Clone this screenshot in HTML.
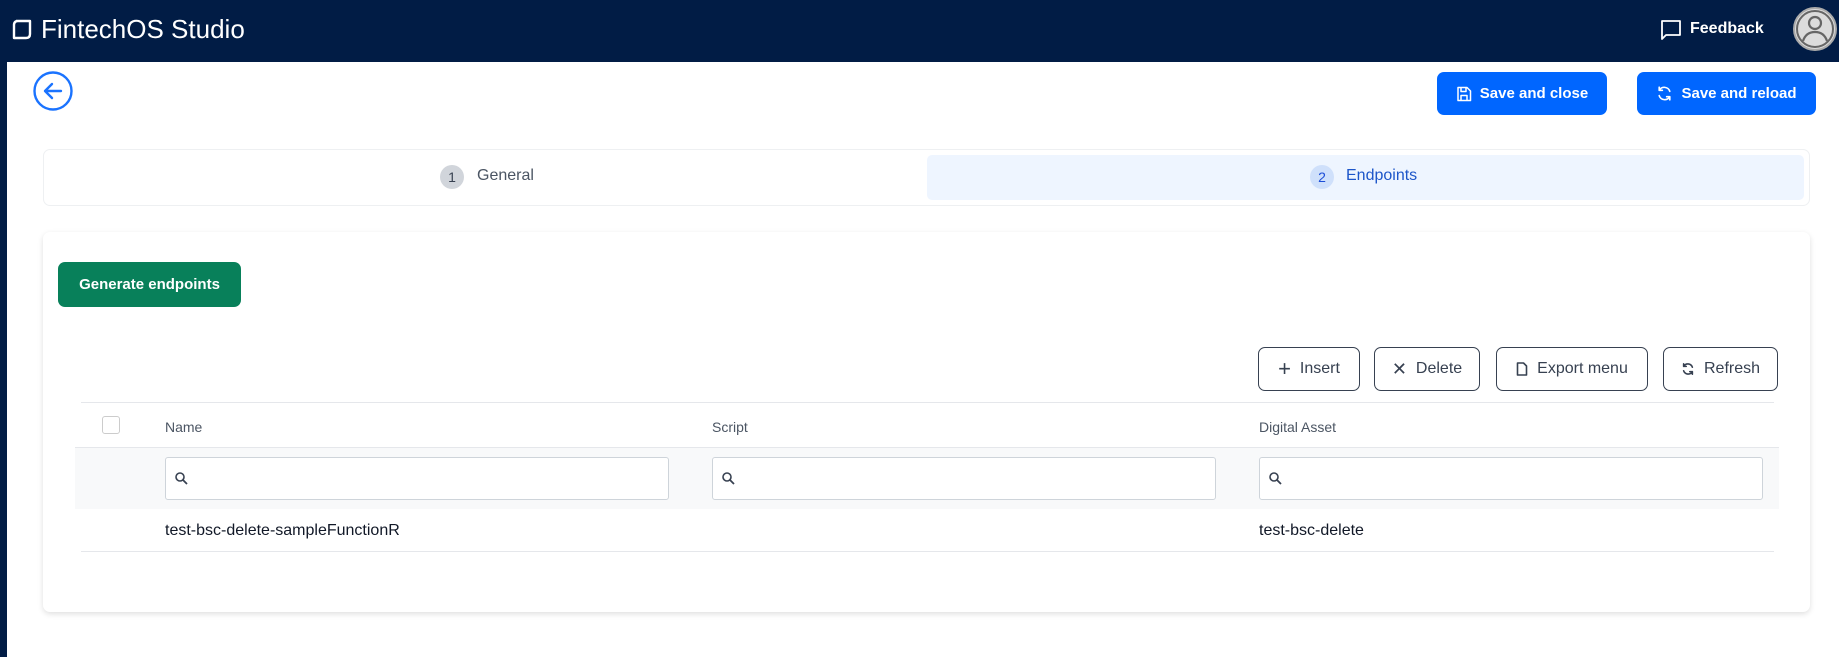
<!DOCTYPE html>
<html><head><meta charset="utf-8"><style>
*{box-sizing:border-box;margin:0;padding:0}
body{width:1839px;height:657px;background:#fff;font-family:"Liberation Sans",sans-serif;position:relative;overflow:hidden;color:#1f2937}
.a{position:absolute}
.hdr{left:0;top:0;width:1839px;height:62px;background:#011c45}
.strip{left:0;top:62px;width:7px;height:595px;background:#011c45}
.bb{background:#0066ff;color:#fff;border-radius:7px;font-size:15px;font-weight:bold;display:flex;align-items:center;justify-content:center;gap:8px}
.ob{border:1px solid #374151;border-radius:7px;font-size:16px;color:#374151;display:flex;align-items:center;justify-content:center;gap:9px;top:347px;height:44px;background:#fff}
.th{font-size:14px;color:#4b5563;top:419px}
.inp{top:457px;height:43px;border:1px solid #ced4da;border-radius:3px;background:#fff}
.inp svg{position:absolute;left:8px;top:13px}
.td{font-size:16px;color:#111827;top:522px}
</style></head><body>
<div class="a hdr"></div>
<div class="a strip"></div>
<svg class="a" style="left:12px;top:19px" width="21" height="21" viewBox="0 0 21 21"><path d="M4 2H18V15Q18 19 14 19H2V6Q2 2 6 2" fill="none" stroke="#fff" stroke-width="2.4" stroke-linejoin="round"/></svg>
<div class="a" style="left:41px;top:14px;font-size:26px;color:#fff">FintechOS Studio</div>
<svg class="a" style="left:1660px;top:19px" width="22" height="22" viewBox="0 0 22 22"><path d="M2 2H20V16H6L2 20Z" fill="none" stroke="#fff" stroke-width="1.8" stroke-linejoin="round"/></svg>
<div class="a" style="left:1690px;top:20px;font-size:16px;font-weight:bold;color:#fff">Feedback</div>
<svg class="a" style="left:1792px;top:6px" width="46" height="46" viewBox="0 0 46 46"><circle cx="23" cy="23" r="21" fill="#dcdcdc" stroke="#aaa" stroke-width="2"/><circle cx="23" cy="23" r="18" fill="none" stroke="#666" stroke-width="2"/><circle cx="23" cy="17" r="6" fill="none" stroke="#666" stroke-width="2.2"/><path d="M11 35Q14 26 23 26Q32 26 35 35" fill="none" stroke="#666" stroke-width="2.2"/></svg>
<svg class="a" style="left:33px;top:71px" width="40" height="40" viewBox="0 0 40 40"><circle cx="20" cy="20" r="18.5" fill="none" stroke="#1a73ff" stroke-width="2.4"/><path d="M28 20H12M19 13L12 20L19 27" fill="none" stroke="#1a73ff" stroke-width="2.4" stroke-linecap="round" stroke-linejoin="round"/></svg>
<div class="a bb" style="left:1437px;top:72px;width:170px;height:43px"><svg width="16" height="16" viewBox="0 0 16 16"><path d="M2 1.5H11L14.5 5V14.5H2Z M5 1.5V5.5H10V1.5 M5 14.5V9.5H11V14.5" fill="none" stroke="#fff" stroke-width="1.5" stroke-linejoin="round"/></svg>Save and close</div>
<div class="a bb" style="left:1637px;top:72px;width:179px;height:43px"><svg width="17" height="17" viewBox="0 0 16 16"><path d="M13 6A5.5 5.5 0 0 0 3 5M3 2V5H6M3 10A5.5 5.5 0 0 0 13 11M13 14V11H10" fill="none" stroke="#fff" stroke-width="1.5" stroke-linecap="round" stroke-linejoin="round"/></svg>Save and reload</div>
<div class="a" style="left:43px;top:149px;width:1767px;height:57px;border:1px solid #eef0f2;border-radius:7px"></div>
<div class="a" style="left:927px;top:155px;width:877px;height:45px;background:#eef5ff;border-radius:5px"></div>
<div class="a" style="left:440px;top:165px;width:24px;height:24px;border-radius:50%;background:#d1d5db;color:#374151;font-size:14px;text-align:center;line-height:24px">1</div>
<div class="a" style="left:477px;top:167px;font-size:16px;color:#4b5563">General</div>
<div class="a" style="left:1310px;top:165px;width:24px;height:24px;border-radius:50%;background:#cfe0fb;color:#1d4ed8;font-size:14px;text-align:center;line-height:24px">2</div>
<div class="a" style="left:1346px;top:167px;font-size:16px;color:#1d56c9">Endpoints</div>
<div class="a" style="left:43px;top:232px;width:1767px;height:380px;border-radius:7px;box-shadow:0 2px 6px rgba(0,0,0,0.13);background:#fff"></div>
<div class="a" style="left:58px;top:262px;width:183px;height:45px;background:#08805a;border-radius:7px;color:#fff;font-size:15px;font-weight:bold;display:flex;align-items:center;justify-content:center">Generate endpoints</div>
<div class="a ob" style="left:1258px;width:102px"><span style="font-size:22px;line-height:16px">+</span>Insert</div>
<div class="a ob" style="left:1374px;width:106px"><span style="font-size:18px;line-height:16px">✕</span>Delete</div>
<div class="a ob" style="left:1496px;width:152px"><svg width="12" height="14" viewBox="0 0 12 14"><path d="M1.5 1H7.5L10.5 4V13H1.5Z" fill="none" stroke="#374151" stroke-width="1.6" stroke-linejoin="round"/></svg>Export menu</div>
<div class="a ob" style="left:1663px;width:115px"><svg width="14" height="14" viewBox="0 0 16 16"><path d="M13 6A5.5 5.5 0 0 0 3 5M3 2V5H6M3 10A5.5 5.5 0 0 0 13 11M13 14V11H10" fill="none" stroke="#374151" stroke-width="1.8" stroke-linecap="round" stroke-linejoin="round"/></svg>Refresh</div>
<div class="a" style="left:81px;top:402px;width:1693px;height:1px;background:#e5e7eb"></div>
<div class="a" style="left:102px;top:416px;width:18px;height:18px;border:1px solid #ccc;border-radius:3px"></div>
<div class="a th" style="left:165px">Name</div>
<div class="a th" style="left:712px">Script</div>
<div class="a th" style="left:1259px">Digital Asset</div>
<div class="a" style="left:75px;top:447px;width:1704px;height:62px;background:#f8f9fa;border-top:1px solid #e5e7eb"></div>
<div class="a inp" style="left:165px;width:504px"><svg width="15" height="15" viewBox="0 0 15 15"><circle cx="6" cy="6" r="4" fill="none" stroke="#374151" stroke-width="1.6"/><path d="M9 9L13 13" stroke="#374151" stroke-width="1.8"/></svg></div>
<div class="a inp" style="left:712px;width:504px"><svg width="15" height="15" viewBox="0 0 15 15"><circle cx="6" cy="6" r="4" fill="none" stroke="#374151" stroke-width="1.6"/><path d="M9 9L13 13" stroke="#374151" stroke-width="1.8"/></svg></div>
<div class="a inp" style="left:1259px;width:504px"><svg width="15" height="15" viewBox="0 0 15 15"><circle cx="6" cy="6" r="4" fill="none" stroke="#374151" stroke-width="1.6"/><path d="M9 9L13 13" stroke="#374151" stroke-width="1.8"/></svg></div>
<div class="a td" style="left:165px">test-bsc-delete-sampleFunctionR</div>
<div class="a td" style="left:1259px">test-bsc-delete</div>
<div class="a" style="left:81px;top:551px;width:1693px;height:1px;background:#e5e7eb"></div>
</body></html>
